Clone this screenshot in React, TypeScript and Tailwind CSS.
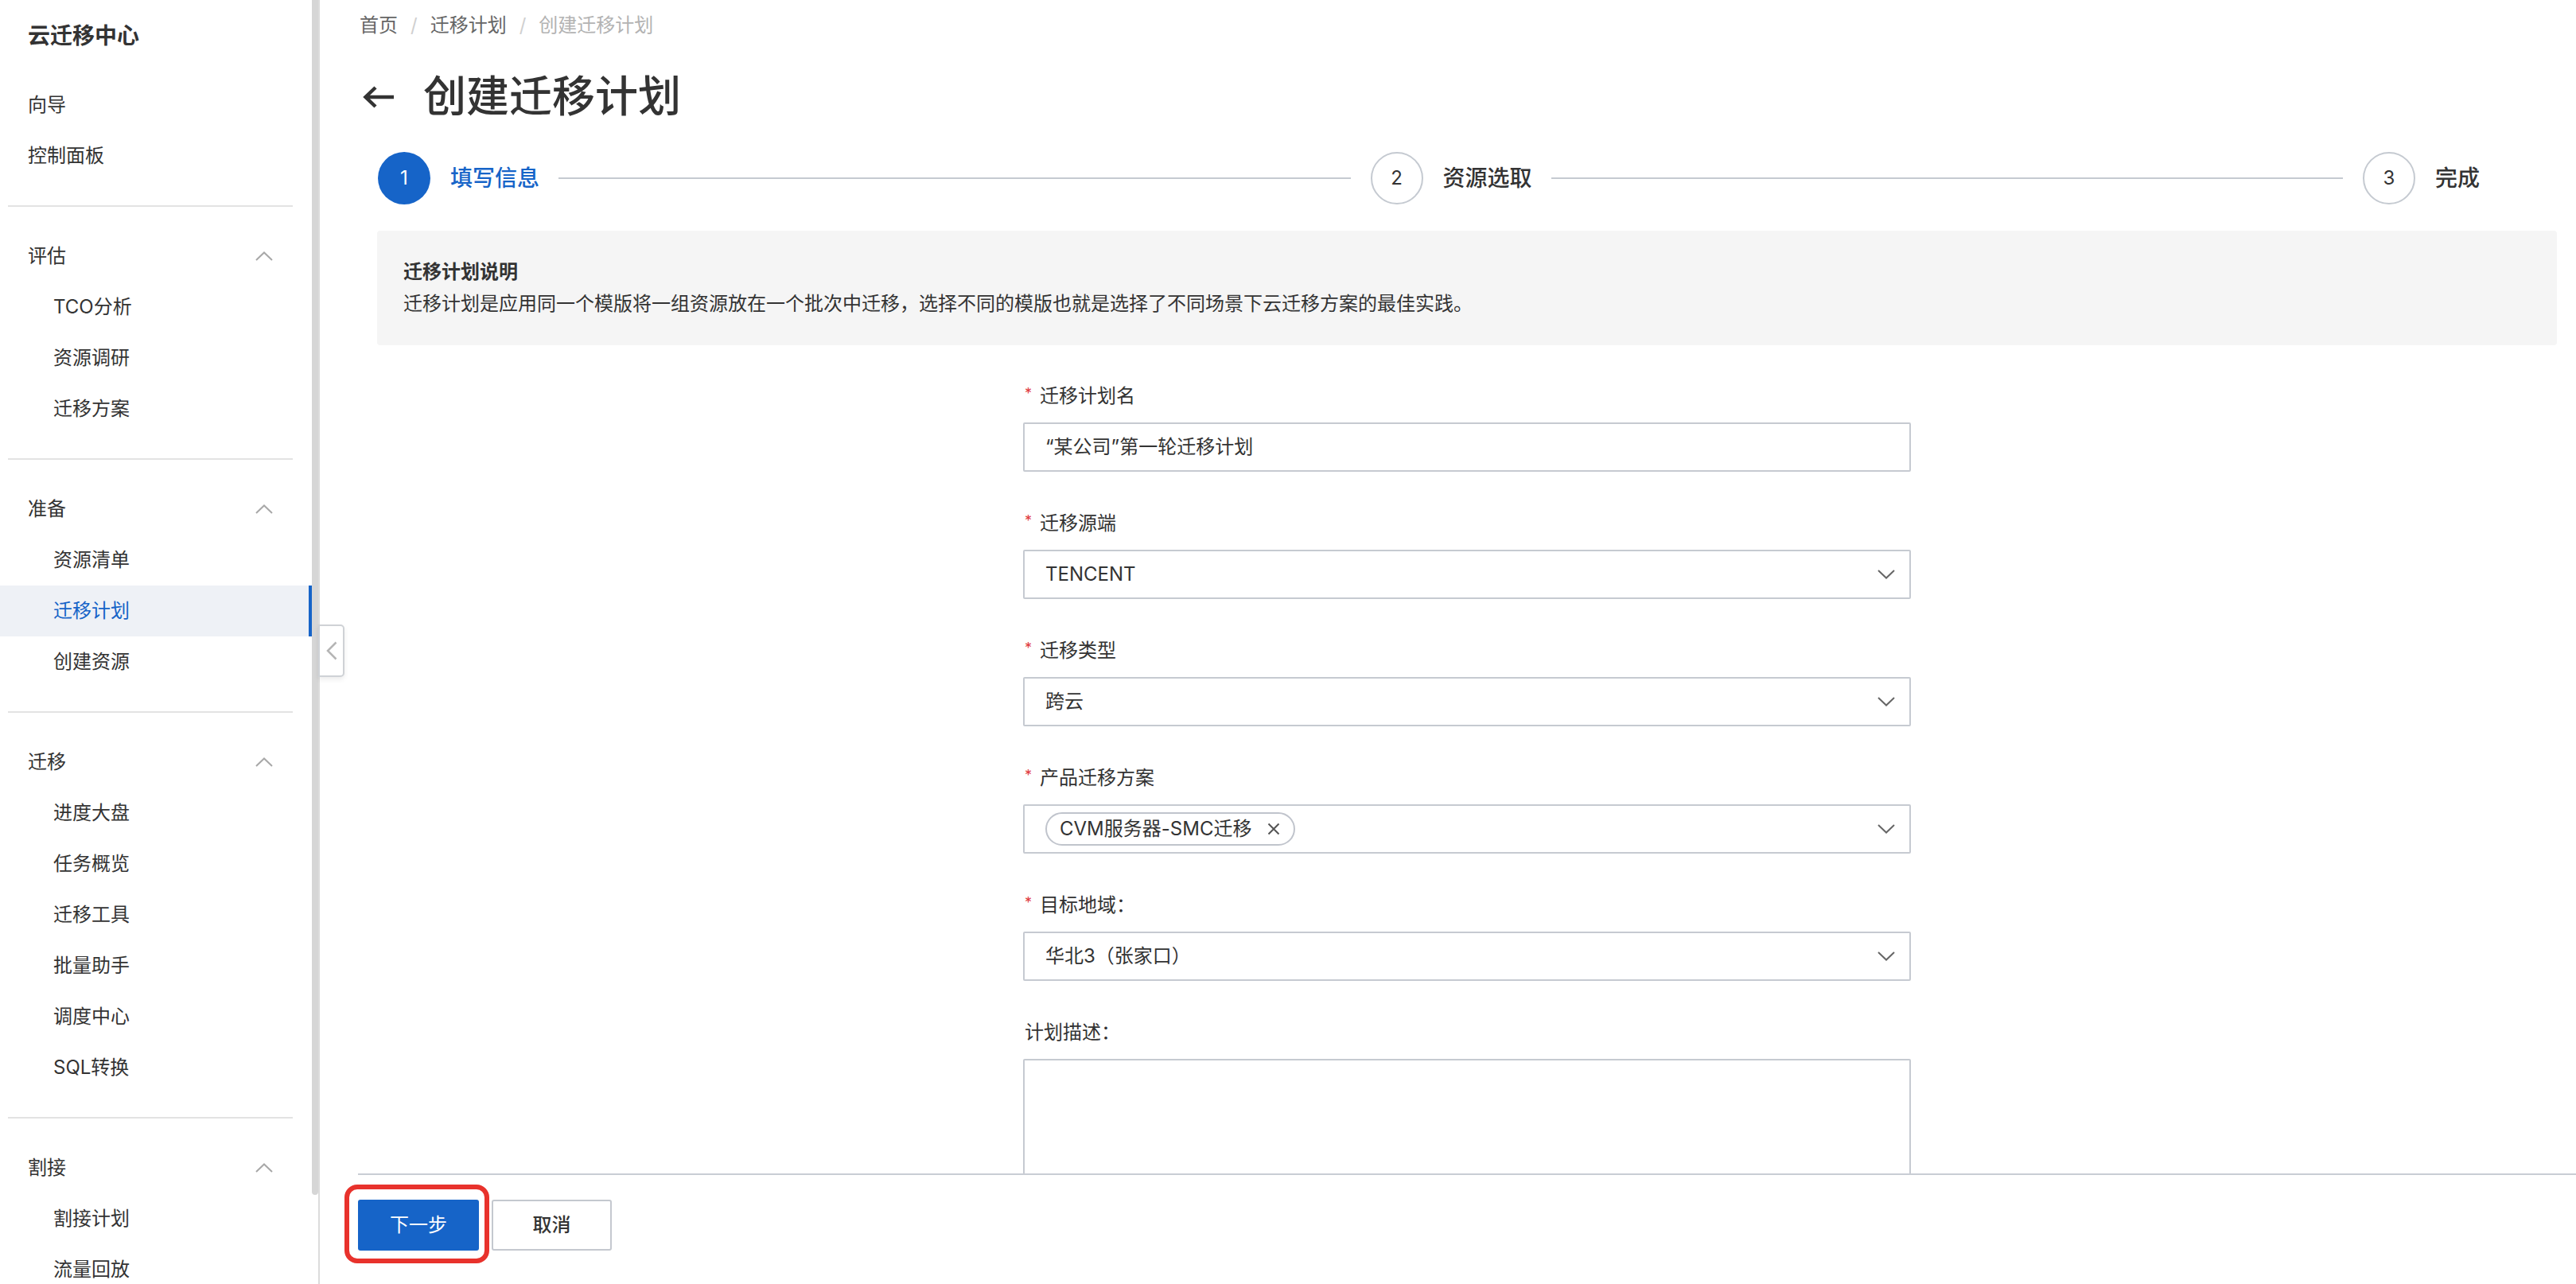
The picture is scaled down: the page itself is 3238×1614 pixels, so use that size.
import React from "react";

const groups = [
  { title: "评估", items: ["TCO分析", "资源调研", "迁移方案"] },
  { title: "准备", items: ["资源清单", "迁移计划", "创建资源"] },
  { title: "迁移", items: ["进度大盘", "任务概览", "迁移工具", "批量助手", "调度中心", "SQL转换"] },
  { title: "割接", items: ["割接计划", "流量回放"] },
];

const ChevronUp = () => (
  <svg width="22" height="12" viewBox="0 0 22 12" fill="none">
    <path d="M1 11 L11 1.5 L21 11" stroke="#a8a8a8" strokeWidth="2" />
  </svg>
);

const ChevronDown = () => (
  <svg width="22" height="12" viewBox="0 0 22 12" fill="none" className="absolute right-[18px] top-1/2 -translate-y-1/2">
    <path d="M1 1 L11 10.5 L21 1" stroke="#666" strokeWidth="2" />
  </svg>
);

const Divider = () => <div className="ml-[10px] h-[2px] w-[358px] bg-[#e3e3e3]" />;

function Sidebar() {
  return (
    <aside className="relative h-full w-[402px] shrink-0 overflow-hidden border-r-2 border-[#dcdcdc] bg-white">
      {/* scrollbar thumb */}
      <div className="absolute right-0 top-0 h-[1502px] w-[8px] rounded-b-full bg-[#d6d6d6]" />
      <div className="w-[392px] text-[#333]">
        <div className="flex h-[90px] items-center pl-[35px] text-[28px] font-semibold">云迁移中心</div>
        <div className="pt-[10px] pb-[30px]">
          <div className="flex h-[64px] items-center pl-[35px] text-[24px]">向导</div>
          <div className="flex h-[64px] items-center pl-[35px] text-[24px]">控制面板</div>
        </div>
        {groups.map((g) => (
          <div key={g.title}>
            <Divider />
            <div className="py-[30px]">
              <div className="flex h-[64px] items-center justify-between pl-[35px] pr-[49px] text-[24px]">
                <span>{g.title}</span>
                <ChevronUp />
              </div>
              {g.items.map((it) =>
                it === "迁移计划" ? (
                  <div
                    key={it}
                    className="flex h-[64px] items-center border-r-4 border-[#1664c8] bg-[#eef1f6] pl-[67px] text-[24px] text-[#1664c8]"
                  >
                    {it}
                  </div>
                ) : (
                  <div key={it} className="flex h-[64px] items-center pl-[67px] text-[24px]">
                    {it}
                  </div>
                )
              )}
            </div>
          </div>
        ))}
      </div>
    </aside>
  );
}

function Step({ n, label, active, last }: { n: number; label: string; active?: boolean; last?: boolean }) {
  return (
    <div className={last ? "flex shrink-0 items-center" : "flex flex-1 items-center"}>
      <div
        className={
          active
            ? "flex h-[66px] w-[66px] shrink-0 items-center justify-center rounded-full bg-[#1664c8] text-[24px] text-white"
            : "flex h-[66px] w-[66px] shrink-0 items-center justify-center rounded-full border-2 border-[#c5cad1] bg-white text-[24px] text-[#333]"
        }
      >
        {n}
      </div>
      <span
        className={
          active
            ? "ml-[25px] shrink-0 text-[28px] font-medium text-[#1664c8]"
            : "ml-[25px] shrink-0 text-[28px] font-medium text-[#333]"
        }
      >
        {label}
      </span>
      {!last && <div className="ml-[24px] mr-[25px] h-[2px] flex-1 bg-[#c5cad1]" />}
    </div>
  );
}

function Label({ text, required = true }: { text: string; required?: boolean }) {
  return (
    <div className="flex h-[32px] items-center pl-[2px] text-[24px] text-[#333]">
      {required && <span className="w-[19px] -translate-y-[4px] text-[18px] text-[#e0393e]">*</span>}
      {text}
    </div>
  );
}

const boxCls =
  "relative mt-[17px] flex h-[62px] items-center rounded-[2px] border-2 border-[#c6cad1] bg-white pl-[26px] text-[24px] text-[#333]";

export default function App() {
  return (
    <div className="relative flex h-[1614px] w-full overflow-hidden bg-white font-['Inter','Noto_Sans_CJK_SC',sans-serif]">
      <Sidebar />

      {/* collapse handle */}
      <div className="absolute left-[400px] top-[785px] z-10 flex h-[66px] w-[33px] items-center justify-center rounded-r-[5px] border-2 border-[#cfd2d6] bg-white shadow-[0_3px_6px_rgba(0,0,0,0.08)]">
        <svg width="14" height="24" viewBox="0 0 14 24" fill="none">
          <path d="M12.5 1.5 L2 12 L12.5 22.5" stroke="#b5b5b5" strokeWidth="2.5" />
        </svg>
      </div>

      <main className="flex h-full min-w-0 flex-1 flex-col">
        <div className="min-h-0 flex-1 overflow-hidden">
          {/* breadcrumb */}
          <div className="mt-[12px] flex h-[40px] items-center gap-[16px] pl-[50px] text-[24px]">
            <span className="text-[#666]">首页</span>
            <span className="text-[#d0d0d0]">/</span>
            <span className="text-[#666]">迁移计划</span>
            <span className="text-[#d0d0d0]">/</span>
            <span className="text-[#b3b3b3]">创建迁移计划</span>
          </div>

          {/* title */}
          <div className="mt-[38px] flex h-[64px] items-center gap-[36px] pl-[54px]">
            <svg width="40" height="28" viewBox="0 0 40 28" fill="none">
              <path d="M39 14 H4 M16 2 L3.5 14 L16 26" stroke="#333" strokeWidth="4.5" />
            </svg>
            <h1 className="text-[54px] font-medium leading-none text-[#333]">创建迁移计划</h1>
          </div>

          {/* steps */}
          <div className="mt-[36px] flex h-[67px] items-center pl-[73px] pr-[121px]">
            <Step n={1} label="填写信息" active />
            <Step n={2} label="资源选取" />
            <Step n={3} label="完成" last />
          </div>

          <div className="pl-[72px] pr-[24px]">
            {/* info box */}
            <div className="mt-[33px] h-[144px] rounded-[4px] bg-[#f5f5f5] px-[33px] pt-[34px]">
              <div className="text-[24px] font-semibold leading-[36px] text-[#333]">迁移计划说明</div>
              <div className="mt-[2px] text-[24px] leading-[40px] text-[#333]">
                迁移计划是应用同一个模版将一组资源放在一个批次中迁移，选择不同的模版也就是选择了不同场景下云迁移方案的最佳实践。
              </div>
            </div>

            {/* form */}
            <div className="mx-auto mt-[48px] w-[1116px]">
              <div className="mb-[49px]">
                <Label text="迁移计划名" />
                <div className={boxCls}>“某公司”第一轮迁移计划</div>
              </div>
              <div className="mb-[49px]">
                <Label text="迁移源端" />
                <div className={boxCls}>
                  TENCENT
                  <ChevronDown />
                </div>
              </div>
              <div className="mb-[49px]">
                <Label text="迁移类型" />
                <div className={boxCls}>
                  跨云
                  <ChevronDown />
                </div>
              </div>
              <div className="mb-[49px]">
                <Label text="产品迁移方案" />
                <div className={boxCls}>
                  <span className="flex h-[42px] items-center gap-[20px] rounded-full border-2 border-[#c0c4cc] pl-[16px] pr-[17px] text-[24px] text-[#333]">
                    CVM服务器-SMC迁移
                    <svg width="16" height="16" viewBox="0 0 16 16" fill="none">
                      <path d="M1.5 1.5 L14.5 14.5 M14.5 1.5 L1.5 14.5" stroke="#555" strokeWidth="2" />
                    </svg>
                  </span>
                  <ChevronDown />
                </div>
              </div>
              <div className="mb-[49px]">
                <Label text="目标地域：" />
                <div className={boxCls}>
                  华北3（张家口）
                  <ChevronDown />
                </div>
              </div>
              <div>
                <Label text="计划描述：" required={false} />
                <div className="mt-[17px] h-[240px] rounded-[2px] border-2 border-[#c6cad1] bg-white" />
              </div>
            </div>
          </div>
        </div>

        {/* footer */}
        <div className="ml-[48px] flex h-[139px] shrink-0 gap-[16px] border-t-2 border-[#c9cdd4] bg-white pt-[31px]">
          <button className="relative h-[64px] w-[152px] rounded-[3px] bg-[#1664c8] text-[24px] text-white">
            下一步
            <span className="pointer-events-none absolute -bottom-[16px] -left-[17px] -right-[13px] -top-[19px] rounded-[16px] border-[6px] border-[#e8322c]" />
          </button>
          <button className="h-[64px] w-[151px] rounded-[3px] border-2 border-[#c4c8cf] bg-white text-[24px] font-medium text-[#333]">
            取消
          </button>
        </div>
      </main>
    </div>
  );
}
